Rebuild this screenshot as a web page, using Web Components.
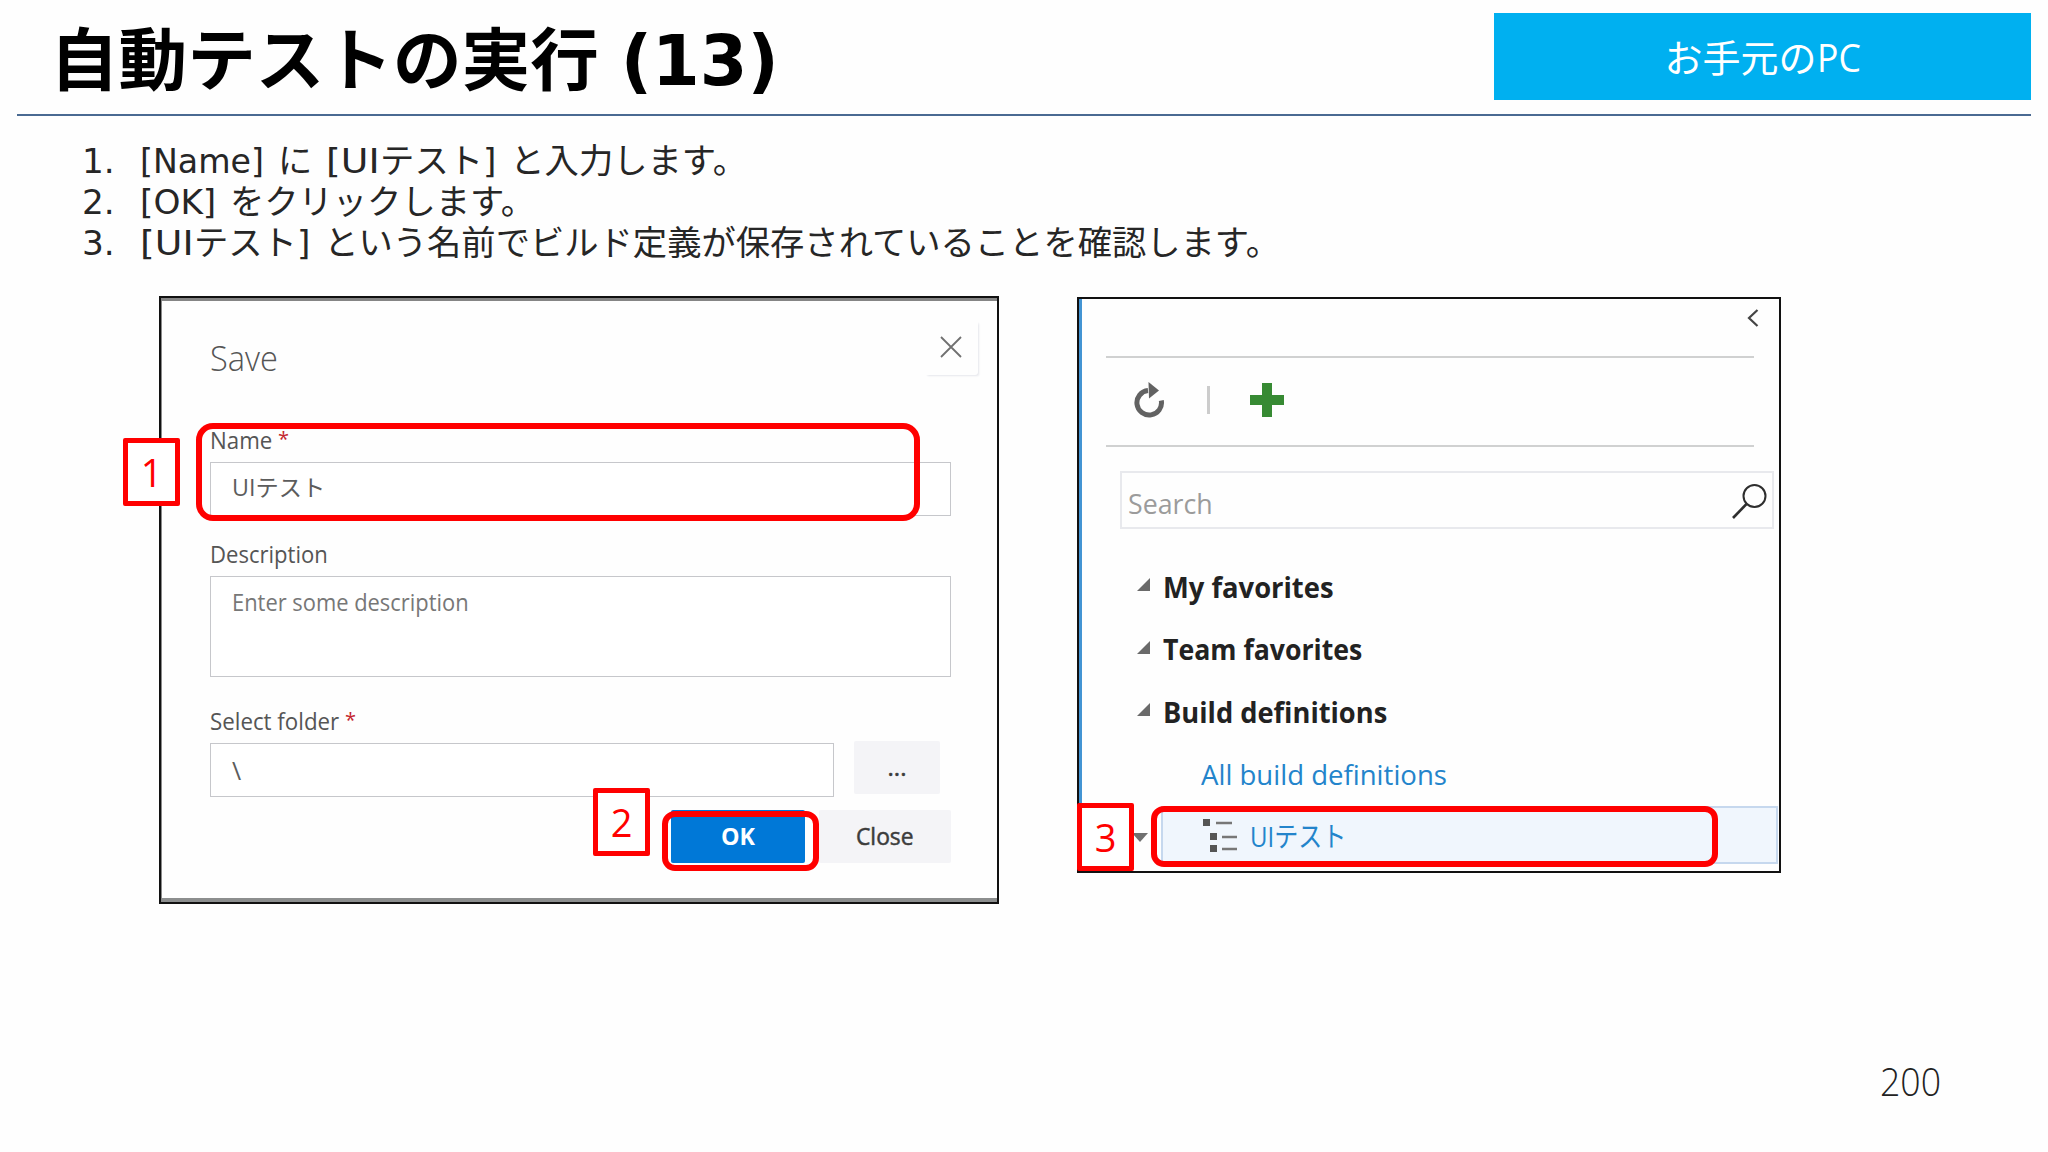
<!DOCTYPE html>
<html lang="ja">
<head>
<meta charset="utf-8">
<title>自動テストの実行 (13)</title>
<style>
  body { margin: 0; background: #fefefe; }
</style>
</head>
<body>

<slide-page>
  <slide-header slot="header">
    自動テストの実行<span style="margin-left:-2px">&nbsp;(13)</span>
    <slide-badge slot="badge">お手元の<fit-text w="44">PC</fit-text></slide-badge>
  </slide-header>

  <step-list slot="steps">
    <step-item n="1."><fit-text w="124">[Name]</fit-text> に <fit-text w="54">[UI</fit-text>テスト] と入力します。</step-item>
    <step-item n="2."><fit-text w="76">[OK]</fit-text> をクリックします。</step-item>
    <step-item n="3."><fit-text w="54">[UI</fit-text>テスト] という名前でビルド定義が保存されていることを確認します。</step-item>
  </step-list>

  <save-dialog></save-dialog>
  <build-explorer></build-explorer>

  <mark-box slot="marks" style="left:196px;top:423px;width:724px;height:98px;--r:17px"></mark-box>
  <mark-box slot="marks" style="left:662px;top:811px;width:157px;height:60px"></mark-box>
  <mark-box slot="marks" style="left:1151px;top:806px;width:567px;height:61px"></mark-box>
  <mark-tag slot="marks" style="left:123px;top:438px">1</mark-tag>
  <mark-tag slot="marks" style="left:593px;top:788px">2</mark-tag>
  <mark-tag slot="marks" style="left:1077px;top:803px">3</mark-tag>

  <fit-text slot="footer" w="61">200</fit-text>
</slide-page>

<script>
class Base extends HTMLElement {
  constructor() {
    super()
    this.$shadow = this.attachShadow({mode: 'open'})
    this.$shadow.innerHTML = `<style>${this.styles()}</style>${this.render()}`
  }
  styles() { return `` }
  render() { return `<slot></slot>` }
}

// squeezes or stretches one line of text to the width in "w"
class FitText extends Base {
  connectedCallback() {
    const span = this.$shadow.querySelector('span')
    const w = Number(this.getAttribute('w'))
    const natural = span.offsetWidth
    this.style.width = `${w}px`
    if (natural) span.style.transform = `scaleX(${w / natural})`
  }
  styles() {
    return `
      :host { display: inline-block; white-space: pre; text-align: left; }
      span { display: inline-block; transform-origin: 0 50%; }
    `
  }
  render() { return `<span><slot></slot></span>` }
}

class SlidePage extends Base {
  styles() {
    return `
      :host {
        display: flex; flex-direction: column; position: relative;
        box-sizing: border-box; width: 2048px; height: 1152px; overflow: hidden;
        background: #fefefe; color: #222;
        font-family: "Open Sans", "Noto Sans", "Noto Sans CJK JP", sans-serif;
      }
      .figures {
        display: flex; align-items: flex-start; gap: 78px;
        padding: 0 0 0 159px; margin-top: 31px; flex: 1;
      }
      footer {
        display: flex; justify-content: flex-end;
        height: 60px; line-height: 60px; padding: 0 107px 41px 0;
        font-size: 38px; font-weight: 300; color: #222;
      }
    `
  }
  render() {
    return `
      <slot name="header"></slot>
      <slot name="steps"></slot>
      <div class="figures"><slot></slot></div>
      <footer><slot name="footer"></slot></footer>
      <slot name="marks"></slot>
    `
  }
}

class SlideHeader extends Base {
  styles() {
    return `
      :host {
        display: flex; justify-content: space-between; box-sizing: border-box;
        height: 116px; margin: 0 17px; border-bottom: 2px solid #4a6a92;
      }
      h1 {
        margin: 0; padding: 10px 0 0 33px; white-space: nowrap;
        font: 700 68.600px/103px "DejaVu Sans", "Noto Sans CJK JP", sans-serif; color: #000;
      }
    `
  }
  render() { return `<h1><slot></slot></h1><slot name="badge"></slot>` }
}

class SlideBadge extends Base {
  styles() {
    return `
      :host {
        display: flex; align-items: center; justify-content: center;
        width: 537px; height: 87px; margin-top: 13px;
        background: #00b0f0; color: #fff; font-size: 38px; line-height: 50px;
      }
    `
  }
}

class StepList extends Base {
  styles() {
    return `
      :host {
        display: flex; flex-direction: column; padding: 25px 0 0 82px;
        font: 34.300px/41.200px "DejaVu Sans", "Noto Sans CJK JP", sans-serif;
        word-spacing: 3px; color: #262626;
      }
    `
  }
}

class StepItem extends Base {
  constructor() {
    super()
    this.$shadow.querySelector('b').textContent = this.getAttribute('n')
  }
  styles() {
    return `
      :host { display: flex; height: 41.200px; white-space: pre; }
      b { flex: 0 0 58px; font-weight: 400; }
    `
  }
  render() { return `<b></b><div><slot></slot></div>` }
}

class MarkBox extends Base {
  styles() {
    return `
      :host {
        display: block; position: absolute; box-sizing: border-box;
        border: 6px solid #f00; border-radius: var(--r, 13px);
      }
    `
  }
}

class MarkTag extends Base {
  styles() {
    return `
      :host {
        display: flex; align-items: center; justify-content: center;
        position: absolute; box-sizing: border-box; width: 57px; height: 68px;
        border: 5px solid #f00; border-radius: 2px; background: #fff;
        color: #f00; font-size: 38px; line-height: 56px;
      }
    `
  }
}

class FormLabel extends Base {
  constructor() {
    super()
    if (!this.hasAttribute('required')) this.$shadow.querySelector('em').remove()
  }
  styles() {
    return `
      :host { display: flex; gap: 6px; height: 30px; line-height: 30px; margin-bottom: 7px; font-size: 23px; color: #555; }
      em { font-style: normal; font-size: 20px; line-height: 28px; color: #c4262e; }
    `
  }
  render() { return `<slot></slot><em>*</em>` }
}

class FormField extends Base {
  styles() {
    return `
      :host {
        display: block; box-sizing: border-box; height: var(--h, 54px); padding: 0 0 0 21px;
        border: 1px solid #c6c7cb; background: #fff;
        font-size: 23px; line-height: var(--lh, 50px); color: #5c5c5c;
      }
    `
  }
}

class FormButton extends Base {
  styles() {
    return `
      :host {
        display: flex; align-items: center; justify-content: center;
        width: 132px; height: 53px; border-radius: 2px;
        background: #f4f4f7; color: #3c3c3c; font-size: 24px; line-height: 50px;
        -webkit-text-stroke: .5px currentColor;
      }
      :host([primary]) {
        width: 134px; background: #0078d7; color: #fff; font-weight: 700;
        -webkit-text-stroke: 0;
      }
    `
  }
}

class SaveDialog extends Base {
  styles() {
    return `
      :host {
        display: flex; flex-direction: column; box-sizing: border-box;
        width: 840px; height: 608px; padding: 22px 46px 0 49px;
        border: 2px solid #111; background: #fefefe;
        box-shadow: inset 0 3px #858585, inset 1px 0 #8a8a8a, inset 0 -4px #8c8e8e;
      }
      header { display: flex; justify-content: space-between; align-items: center; height: 76px; margin-bottom: 29px; }
      h2 { margin: 0; font-size: 35px; line-height: 78px; font-weight: 300; color: #555; }
      .close {
        align-self: flex-start; display: flex; align-items: center; justify-content: center;
        width: 54px; height: 55px; margin-right: -27px; border-radius: 3px;
        box-shadow: 2px 2px 2px -1px #e6e7ec;
      }
      .row { display: flex; gap: 20px; }
      .row form-field { width: 624px; font-size: 25px; --lh: 52px; }
      .row form-button { width: 86px; margin-top: -2px; }
      .actions { display: flex; justify-content: flex-end; gap: 14px; margin-top: 13px; }
      .hint { color: #777; }
    `
  }
  render() {
    return `
      <header>
        <h2><fit-text w="68">Save</fit-text></h2>
        <div class="close">
          <svg width="22" height="22" viewBox="0 0 22 22"><path d="M1 1 21 21M21 1 1 21" stroke="#707070" stroke-width="1.8"/></svg>
        </div>
      </header>
      <form-label required><fit-text w="62">Name</fit-text></form-label>
      <form-field style="--lh:49px"><fit-text w="93">UIテスト</fit-text></form-field>
      <form-label style="margin-top:23px"><fit-text w="118">Description</fit-text></form-label>
      <form-field class="hint" style="--h:101px"><fit-text w="237">Enter some description</fit-text></form-field>
      <form-label required style="margin-top:29px"><fit-text w="129">Select folder</fit-text></form-label>
      <div class="row">
        <form-field>\\</form-field>
        <form-button>...</form-button>
      </div>
      <div class="actions">
        <form-button primary><fit-text w="34">OK</fit-text></form-button>
        <form-button><fit-text w="58">Close</fit-text></form-button>
      </div>
    `
  }
}

class TreeGroup extends Base {
  styles() {
    return `
      :host { display: flex; align-items: center; height: 62.5px; gap: 12px; padding-left: 57px; font-size: 28px; line-height: 62px; font-weight: 700; color: #222; }
      svg { flex: none; margin-top: -4px; }
    `
  }
  render() {
    return `
      <svg width="15" height="15" viewBox="0 0 15 15"><path d="M14 1V14H1Z" fill="#6a6a6a"/></svg>
      <slot></slot>
    `
  }
}

class BuildExplorer extends Base {
  styles() {
    return `
      :host {
        display: flex; flex-direction: column; box-sizing: border-box;
        width: 704px; height: 576px; margin-top: 1px;
        border: 2px solid #111; background: #fefefe; box-shadow: inset 3px 0 #4394d3;
      }
      .top { display: flex; justify-content: flex-end; box-sizing: border-box; height: 57px; padding: 10px 20px 0 0; }
      .toolbar {
        display: flex; align-items: center; box-sizing: border-box;
        height: 91px; margin: 0 25px 0 27px; padding: 0 0 2px 27px;
        border: solid #d0d1d1; border-width: 2px 0;
      }
      .toolbar i { width: 3px; height: 28px; margin: 0 40px 0 42px; background: #ccc; }
      .search {
        display: flex; justify-content: space-between; box-sizing: border-box;
        height: 58px; margin: 24px 5px 0 41px; padding: 0 5px 0 6px;
        border: 2px solid #e8e9ed; font-size: 28px; line-height: 60px; color: #9b9b9b;
      }
      .search svg { margin-top: 9px; }
      .tree { display: flex; flex-direction: column; margin-top: 27px; }
      .link { height: 62px; padding-left: 122px; font-size: 28px; line-height: 62px; color: #2384cb; }
      .selected { display: flex; align-items: center; height: 58px; margin-top: 1px; }
      .selected > svg { flex: none; margin: 6px 13px 0 53px; }
      .item {
        display: flex; align-items: center; gap: 12px; flex: 1; box-sizing: border-box;
        height: 58px; padding: 2px 0 0 40px; border: 2px solid #c6d8ee; margin-right: 1px;
        background: #f0f6fd; color: #2384cb; font-size: 28px; line-height: 54px;
      }
    `
  }
  render() {
    return `
      <div class="top">
        <svg width="12" height="18" viewBox="0 0 12 18"><path d="M10.5 1 2 9l8.500 8" fill="none" stroke="#444" stroke-width="2.2"/></svg>
      </div>
      <div class="toolbar">
        <svg width="32" height="36" viewBox="0 0 32 36">
          <path d="M15 8.500A12.300 12.300 0 1 0 28.300 18.500" fill="none" stroke="#626262" stroke-width="5"/>
          <path d="M15.500 0 26 8.500 16 16.500Z" fill="#626262"/>
        </svg>
        <i></i>
        <svg width="34" height="34" viewBox="0 0 34 34"><path d="M12 0h10v12h12v10H22v12H12V22H0V12h12Z" fill="#378a33"/></svg>
      </div>
      <div class="search">
        <fit-text w="85">Search</fit-text>
        <svg width="36" height="38" viewBox="0 0 36 38"><g fill="none" stroke="#2e2e2e"><circle cx="23.500" cy="14" r="11" stroke-width="2"/><path d="M15.500 22 2 36" stroke-width="2.600"/></g></svg>
      </div>
      <div class="tree">
        <tree-group><fit-text w="171">My favorites</fit-text></tree-group>
        <tree-group><fit-text w="199">Team favorites</fit-text></tree-group>
        <tree-group><fit-text w="224">Build definitions</fit-text></tree-group>
        <div class="link"><fit-text w="246">All build definitions</fit-text></div>
        <div class="selected">
          <svg width="16" height="10" viewBox="0 0 16 10"><path d="M0 0h16L8 9Z" fill="#707070"/></svg>
          <div class="item">
            <svg width="35" height="34" viewBox="0 0 35 34">
              <path d="M0 0h7v7H0ZM7 14h7v7H7ZM7 26h7v7H7Z" fill="#555"/>
              <path d="M13 4h16M19 18h15M19 30h15" stroke="#777" stroke-width="2.400"/>
            </svg>
            <fit-text w="96">UIテスト</fit-text>
          </div>
        </div>
      </div>
    `
  }
}

customElements.define('fit-text', FitText)
customElements.define('slide-header', SlideHeader)
customElements.define('slide-badge', SlideBadge)
customElements.define('step-list', StepList)
customElements.define('step-item', StepItem)
customElements.define('mark-box', MarkBox)
customElements.define('mark-tag', MarkTag)
customElements.define('form-label', FormLabel)
customElements.define('form-field', FormField)
customElements.define('form-button', FormButton)
customElements.define('tree-group', TreeGroup)
customElements.define('save-dialog', SaveDialog)
customElements.define('build-explorer', BuildExplorer)
customElements.define('slide-page', SlidePage)

// the inherited fonts are only settled once every element is defined
const refit = root => {
  for (const el of root.querySelectorAll('*')) {
    if (el instanceof FitText) el.connectedCallback()
    if (el.shadowRoot) refit(el.shadowRoot)
  }
}
refit(document)
</script>
</body>
</html>
